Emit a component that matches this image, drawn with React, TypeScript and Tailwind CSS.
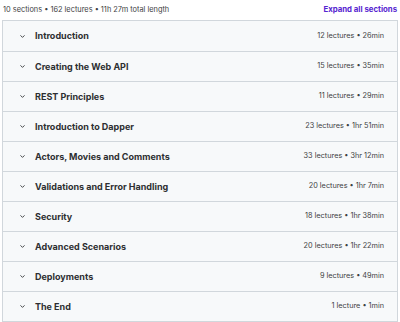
import React from "react";

const sections = [
  ["Introduction", "12 lectures • 26min"],
  ["Creating the Web API", "15 lectures • 35min"],
  ["REST Principles", "11 lectures • 29min"],
  ["Introduction to Dapper", "23 lectures • 1hr 51min"],
  ["Actors, Movies and Comments", "33 lectures • 3hr 12min"],
  ["Validations and Error Handling", "20 lectures • 1hr 7min"],
  ["Security", "18 lectures • 1hr 38min"],
  ["Advanced Scenarios", "20 lectures • 1hr 22min"],
  ["Deployments", "9 lectures • 49min"],
  ["The End", "1 lecture • 1min"],
];

export default function App() {
  return (
    <div className="w-[400px] h-[322px] bg-white overflow-hidden" style={{ fontFamily: "Inter, 'Noto Sans', sans-serif" }}>
      <div className="flex items-center justify-between h-[20px] pl-[3px] pr-[3px] pb-[1px]">
        <span className="text-[7.4px] text-[#3e4143]">10 sections • 162 lectures • 11h 27m total length</span>
        <span className="text-[7.8px] font-bold text-[#5624d0]">Expand all sections</span>
      </div>
      <div className="mx-[2px] border border-[#d1d7dc]">
        {sections.map(([t, m], i) => (
          <div key={i} className={`flex items-center h-[30px] bg-[#f7f9fa] pl-[16px] pr-[13px] ${i > 0 ? "border-t border-[#d1d7dc]" : "h-[29px]"}`}>
            <svg width="7" height="7" viewBox="0 0 24 24" className="text-[#2d2f31]" fill="none" stroke="currentColor" strokeWidth="3" strokeLinecap="round" strokeLinejoin="round">
              <path d="M6 9l6 6 6-6" />
            </svg>
            <span className="ml-[9px] text-[9px] font-bold text-[#2d2f31]">{t}</span>
            <span className="ml-auto text-[7.3px] text-[#3e4143]">{m}</span>
          </div>
        ))}
      </div>
    </div>
  );
}
